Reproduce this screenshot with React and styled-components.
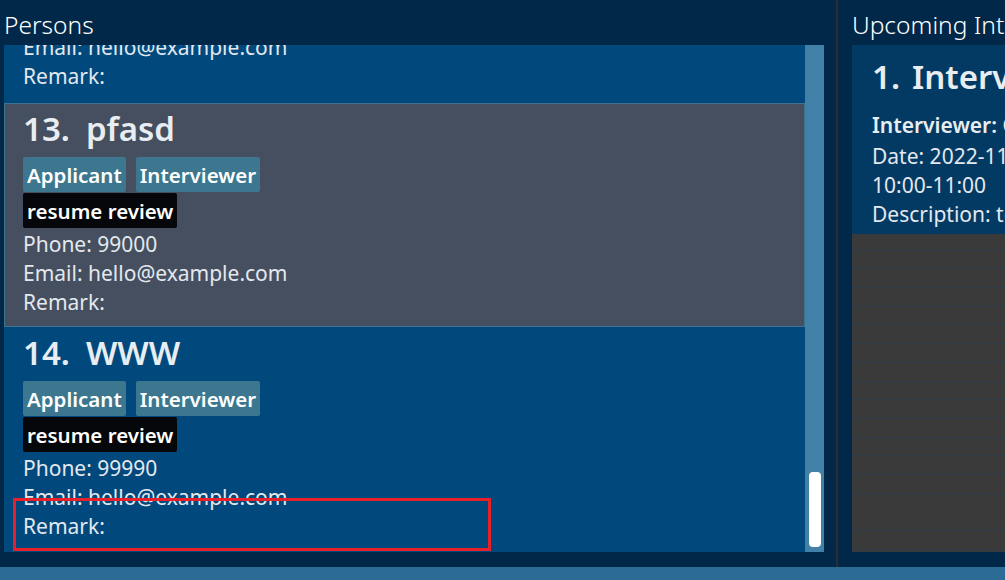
import React from "react";
import styled, { createGlobalStyle } from "styled-components";

const Global = createGlobalStyle`
  html, body { margin: 0; padding: 0; }
  body { background: #022849; font-family: "Noto Sans", "Open Sans", sans-serif; }
  #root { width: 1005px; height: 580px; overflow: hidden; }
`;

const Window = styled.div`
  position: relative;
  width: 1005px;
  height: 580px;
  display: flex;
  flex-direction: column;
  background: #022849;
  overflow: hidden;
`;

const Main = styled.div`
  flex: 1;
  display: flex;
  min-height: 0;
`;

const Pane = styled.section`
  display: flex;
  flex-direction: column;
  width: ${(p) => p.$width};
  flex: ${(p) => (p.$grow ? 1 : "none")};
  padding: 0 ${(p) => p.$padRight || 0}px 15px ${(p) => p.$padLeft}px;
  min-width: 0;
  box-sizing: border-box;
`;

const Divider = styled.div`
  width: 2px;
  background: #2a2e33;
  flex: none;
`;

const PaneTitle = styled.h2`
  margin: 0;
  height: 45px;
  font-family: "Noto Sans", sans-serif;
  font-weight: 300;
  font-size: 24.5px;
  line-height: 50px;
  color: #ffffff;
  white-space: nowrap;
  overflow: hidden;
`;

const ListBox = styled.div`
  flex: 1;
  display: flex;
  min-height: 0;
  overflow: hidden;
`;

const ListViewport = styled.div`
  flex: 1;
  overflow: hidden;
  background: ${(p) => p.$bg};
  min-width: 0;
`;

const ListInner = styled.div`
  margin-top: ${(p) => p.$offset}px;
`;

const ScrollTrack = styled.div`
  width: 19px;
  flex: none;
  background: #4181a8;
  display: flex;
  flex-direction: column;
  justify-content: flex-end;
  align-items: center;
  padding-bottom: 5px;
  box-sizing: border-box;
`;

const ScrollThumb = styled.div`
  width: 12px;
  height: 75px;
  border-radius: 4px;
  background: #ffffff;
`;

const PersonCard = styled.div`
  height: ${(p) => p.$height || 224}px;
  box-sizing: border-box;
  padding: 3px 0 0 18px;
  background: ${(p) => (p.$selected ? "#454f5f" : "#01497c")};
  border: 1px solid ${(p) => (p.$selected ? "#3d7290" : "transparent")};
  color: #ecf0f4;
`;

const CardTitle = styled.div`
  display: flex;
  gap: 16px;
  font-size: 33px;
  font-weight: 600;
  line-height: 44px;
  height: 50px;
  color: #e8edf2;
  white-space: nowrap;
`;

const TagRow = styled.div`
  display: flex;
  gap: 10px;
  height: 36px;
`;

const Tag = styled.span`
  display: inline-flex;
  align-items: center;
  height: 35px;
  padding: 0 4px;
  border-radius: 2px;
  background: ${(p) => (p.$dark ? "#05070a" : "#3d778f")};
  color: #ffffff;
  font-size: 20.5px;
  font-weight: 600;
  white-space: nowrap;
`;

const Details = styled.div`
  padding-top: 1px;
`;

const Field = styled.div`
  font-size: 21px;
  line-height: 29px;
  color: ${(p) => (p.$bold ? "#e8edf2" : "#e3e8ee")};
  font-weight: ${(p) => (p.$bold ? 600 : 400)};
  margin-bottom: ${(p) => (p.$bold ? 2 : 0)}px;
  white-space: nowrap;
`;

const InterviewList = styled.div`
  flex: 1;
  min-height: 0;
  overflow: hidden;
  background-color: #3a3a3a;
  background-image: repeating-linear-gradient(
    to bottom,
    transparent 0px,
    transparent 17.7px,
    #2e3c4a 17.7px,
    #2e3c4a 18.7px
  );
`;

const InterviewCard = styled.div`
  height: 189px;
  box-sizing: border-box;
  padding: 4px 0 0 20px;
  background: #033a63;
  color: #e8edf2;
  white-space: nowrap;
`;

const InterviewTitle = styled.div`
  display: flex;
  gap: 12px;
  font-size: 33px;
  font-weight: 600;
  line-height: 56px;
  height: 62px;
`;

const Highlight = styled.div`
  position: absolute;
  left: 13px;
  top: 498px;
  width: 478px;
  height: 53px;
  box-sizing: border-box;
  border: 3px solid #e8202a;
  pointer-events: none;
`;

const StatusBar = styled.div`
  height: 13px;
  flex: none;
  background: #2b6b94;
`;

const persons = [
  { n: 12, name: "Alex", phone: "99999", height: 226 },
  { n: 13, name: "pfasd", phone: "99000", selected: true },
  { n: 14, name: "WWW", phone: "99990" },
];

function Person({ p }) {
  return (
    <PersonCard $selected={p.selected} $height={p.height}>
      <CardTitle>
        <span>{p.n}.</span>
        <span>{p.name}</span>
      </CardTitle>
      <TagRow>
        <Tag>Applicant</Tag>
        <Tag>Interviewer</Tag>
      </TagRow>
      <TagRow>
        <Tag $dark>resume review</Tag>
      </TagRow>
      <Details>
        <Field>Phone: {p.phone}</Field>
        <Field>Email: hello@example.com</Field>
        <Field>Remark:</Field>
      </Details>
    </PersonCard>
  );
}

export default function App() {
  return (
    <>
      <Global />
      <Window>
        <Main>
          <Pane $width="836px" $padLeft={4} $padRight={12}>
            <PaneTitle>Persons</PaneTitle>
            <ListBox>
              <ListViewport $bg="#01497c">
                <ListInner $offset={-168}>
                  {persons.map((p) => (
                    <Person key={p.n} p={p} />
                  ))}
                </ListInner>
              </ListViewport>
              <ScrollTrack>
                <ScrollThumb />
              </ScrollTrack>
            </ListBox>
          </Pane>
          <Divider />
          <Pane $grow $padLeft={14}>
            <PaneTitle>Upcoming Interviews</PaneTitle>
            <InterviewList>
              <InterviewCard>
                <InterviewTitle>
                  <span>1.</span>
                  <span>Interview</span>
                </InterviewTitle>
                <Field $bold>Interviewer: Charlotte</Field>
                <Field>Date: 2022-11-20</Field>
                <Field>10:00-11:00</Field>
                <Field>Description: technical</Field>
              </InterviewCard>
            </InterviewList>
          </Pane>
        </Main>
        <StatusBar />
        <Highlight />
      </Window>
    </>
  );
}
